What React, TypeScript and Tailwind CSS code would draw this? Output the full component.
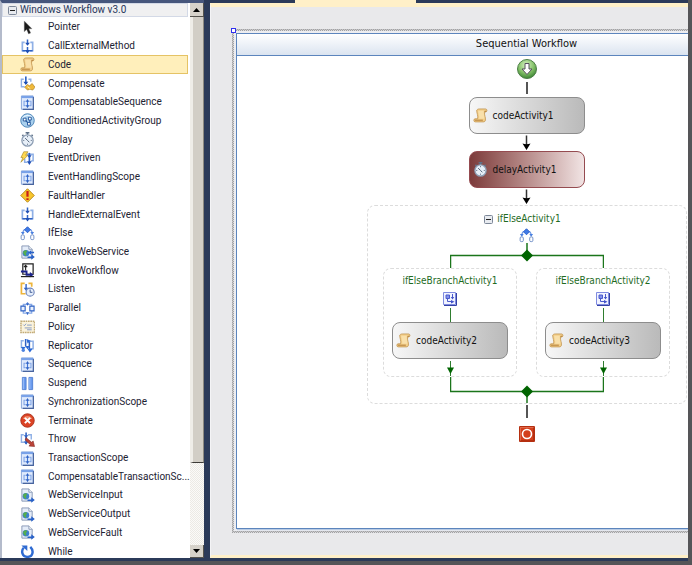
import { useState } from "react"
import type { ReactNode } from "react"

const BLUE = "#2f62c4"
const LIGHT = "#8fb0e6"

function Icon({ children }: { children: ReactNode }) {
  return (
    <svg viewBox="0 0 16 16" className="size-[15px] shrink-0" aria-hidden="true">
      {children}
    </svg>
  )
}

function PointerIcon() {
  return (
    <Icon>
      <path d="M4.500 1v11.500l2.600-2.300 2 4.600 2.300-1-2-4.400h3.400z" fill="#1c1c1c" stroke="#8a8a8a" strokeWidth=".4" />
    </Icon>
  )
}

function CallIcon() {
  return (
    <Icon>
      <path d="M5 3.500H2.500v9H6M11 3.500h2.500v9H10" fill="none" stroke={LIGHT} strokeWidth="1.800" />
      <path d="M6 12.500H2.500M10 12.500h3.500" stroke={BLUE} strokeWidth="1.400" />
      <path d="M8 .5v5M8 8.500v4" stroke={BLUE} strokeWidth="1.600" />
      <path d="M5.500 4h5L8 7.200zM5.200 11.800h5.600L8 15.500z" fill="#1f4fb5" />
    </Icon>
  )
}

function ScrollIcon() {
  return (
    <Icon>
      <path d="M4 2.200C4.800 1.200 6 1 7 1h6.500c1.800 0 1.800 3.200 0 3.200h-1.100c-.7 3.300 1.300 6 .9 8.500-.2 1.500-1 2.100-2.300 2.100H2.200c-1.600 0-1.800-3.300 0-3.300h2.600c1.200-2-1.200-7-.8-9.300z" fill="#f3cf8a" stroke="#bd8f49" strokeWidth=".8" />
      <path d="M5.500 3h6c-.6 3 .9 5.500.6 8.500H6.500c.8-2.500-1-5.500-1-8.500z" fill="#f9e0aa" />
      <path d="M2 13h8.500M12.200 3.600l2-.2" stroke="#b07b35" strokeWidth="1" />
    </Icon>
  )
}

function CompensateIcon() {
  return (
    <Icon>
      <path d="M4 3.500H1.500v8H5M9 3.500h2.500V6" fill="none" stroke={LIGHT} strokeWidth="1.500" />
      <path d="M6.200.5v8" stroke={BLUE} strokeWidth="1.800" />
      <path d="M3.600 6h5.200L6.200 9.500z" fill="#1f4fb5" />
      <path d="M5 12l3-3 2 1.500L13 8l3 4-2.500 3-3-1-2.500 1z" fill="#f0b93a" stroke="#a97c1e" strokeWidth=".7" />
      <path d="M8 11.500l3 2" stroke="#fff2bd" />
    </Icon>
  )
}

function ScopeIcon() {
  return (
    <Icon>
      <path d="M1.500 1H14v14.200H1.500z" fill="#dfeafc" stroke="#86a4da" />
      <path d="M1.500 1H14v2.300H1.500z" fill="#79a2e8" />
      <path d="M14.300 2v13.300H3" fill="none" stroke="#48649e" strokeWidth="1.200" />
      <path d="M6 6.700H4.300v4.600H6M10 6.700h1.700v4.600H10" fill="none" stroke="#86a9e8" strokeWidth="1.200" />
      <path d="M8 5v8" stroke="#3f74d6" strokeWidth="1.200" />
      <path d="M6 7.200h4L8 4.500zM6 11h4l-2 2.800z" fill={BLUE} />
    </Icon>
  )
}

function GroupIcon() {
  return (
    <Icon>
      <circle cx="8" cy="8" r="7.200" fill="#a9d0ee" stroke="#4a83b5" />
      <path d="M3 5.500C5 2 10 1.500 12.500 4.500" stroke="#e6f5ff" strokeWidth="1.500" fill="none" />
      <path d="M3.500 5.500h3v3h-3zM9 4.500h3v3H9zM8 10h3v3H8z" fill="#fff" stroke="#24569c" />
      <path d="M6 8l2.500 2.500M10.500 7.500V10" stroke="#24569c" strokeWidth="1.200" />
    </Icon>
  )
}

function ClockIcon() {
  return (
    <Icon>
      <path d="M6 .8h4M8 1v2.500M12.300 3l1.300 1.300M3.700 3L2.400 4.300" stroke="#5e7189" strokeWidth="1.500" />
      <circle cx="8" cy="9" r="6" fill="#e7eff8" stroke="#8c9db3" strokeWidth="1.400" />
      <path d="M8 4.500v1M8 12.500v1M3.500 9h1M11.500 9h1M5.500 6.500L8 9l2 2" stroke="#4b5b72" fill="none" />
    </Icon>
  )
}

function EventDrivenIcon() {
  return (
    <Icon>
      <path d="M7 3.500h7v7h-2M5 8v4h3" fill="none" stroke={LIGHT} strokeWidth="1.600" />
      <path d="M10 2v10" stroke={BLUE} strokeWidth="1.800" />
      <path d="M7.500 4.500h5L10 7.500zM7.500 11h5L10 15z" fill="#1f4fb5" />
      <path d="M4 .8h4.500L6 4.500h2.500L1 12l2.200-5H1z" fill="#ffd84e" stroke="#a8892d" strokeWidth=".7" />
    </Icon>
  )
}

function FaultIcon() {
  return (
    <Icon>
      <path d="M8 .8L15.200 8 8 15.200.8 8z" fill="#f8c62c" stroke="#b58418" strokeLinejoin="round" />
      <path d="M8 3.200v6M8 10.800v2" stroke="#c8201a" strokeWidth="2.400" />
    </Icon>
  )
}

function IfElseIcon() {
  return (
    <Icon>
      <path d="M6 3.500Q3 4 3 8M10 3.500Q13 4 13 8" fill="none" stroke="#6e98e6" strokeWidth="1.300" />
      <path d="M8 .8L11.200 4 8 7.200 4.800 4z" fill="#3f7ae6" stroke="#2b5fca" strokeLinejoin="round" />
      <path d="M1 6.300h4l-2 3zM11 6.300h4l-2 3z" fill="#4a80e0" />
      <rect x="1.200" y="9.500" width="3.400" height="5" rx="1.200" fill="#fff" stroke="#6d8cc4" />
      <rect x="11.400" y="9.500" width="3.400" height="5" rx="1.200" fill="#fff" stroke="#6d8cc4" />
    </Icon>
  )
}

function WebIcon({ both = false }: { both?: boolean }) {
  return (
    <Icon>
      <path d="M2 1h7.500L13 4.500V14H2z" fill="#e4ecf8" stroke="#8797b5" />
      <path d="M9.500 1v3.500H13" fill="#fff" stroke="#8797b5" />
      <circle cx="6.300" cy="8.800" r="3.500" fill="#3d7fd0" />
      <path d="M3.300 7.500c1-2 3-2.500 4-1.500s-1 2-1 3 1.500 1 0 2.500c-1.500 0-3-2-3-4z" fill="#55ad4e" />
      <path d="M8 12.200h4V9.800l3.800 3-3.800 3v-2H8z" fill="#2861c8" />
      {both && <path d="M15 7.200h-3V5.500L8.500 8l3.500 2.500V8.800h3z" fill="#2861c8" />}
    </Icon>
  )
}

function InvokeWorkflowIcon() {
  return (
    <Icon>
      <path d="M3 1h11v11H3z" fill="#fff" stroke="#222" strokeWidth="1.300" />
      <path d="M6 8V3M4.300 4.500L6 2.500l1.700 2" fill="none" stroke="#222" strokeWidth="1.200" />
      <path d="M1 9h6v3.500h5" fill="none" stroke="#1b238c" strokeWidth="2" />
      <path d="M10.500 9.500l4 3-4 3z" fill="#1b238c" />
      <path d="M1 14.500h14" stroke="#222" strokeWidth="1.300" />
    </Icon>
  )
}

function ListenIcon() {
  return (
    <Icon>
      <path d="M5 1.500H1.500v11H6M9 1.500h3.500V5" fill="none" stroke="#eeb53b" strokeWidth="1.800" />
      <path d="M6.500 2v5" stroke={BLUE} strokeWidth="1.500" />
      <path d="M4 6h5l-2.500 3.500z" fill={BLUE} />
      <circle cx="10.800" cy="10.800" r="4.300" fill="#e6effc" stroke="#6f86bb" strokeWidth="1.200" />
      <path d="M10.800 8v3h2.400" fill="none" stroke="#3a5590" />
    </Icon>
  )
}

function ParallelIcon() {
  return (
    <Icon>
      <path d="M8 1v2.500H3.500V13H8v2M8 3.500h4.500V13H8" fill="none" stroke="#86a9e8" strokeWidth="1.300" />
      <path d="M1 5.500h4.500v5H1zM10.500 5.500H15v5h-4.500z" fill="#eaf1fd" stroke={BLUE} strokeWidth="1.200" />
      <path d="M6.300 2.500h3.400L8 5zM6.300 12h3.400L8 14.500z" fill={BLUE} />
    </Icon>
  )
}

function PolicyIcon() {
  return (
    <Icon>
      <path d="M1 2.500h14.500v12H1z" fill="#fbf3dc" />
      <path d="M1 2.500h14.500v12H1z" fill="none" stroke="#c2ab78" strokeWidth="1.600" strokeDasharray="1.800 .7" />
      <path d="M3.500 6l1.200 1.200L6.500 5M7.500 6.500h5M5 9.500h7.500M7.500 11.500h5" fill="none" stroke="#8399c4" />
    </Icon>
  )
}

function ReplicatorIcon() {
  return (
    <Icon>
      <path d="M4 3H1.500v7H4M9 3.500h5v8h-3" fill="none" stroke={LIGHT} strokeWidth="1.600" />
      <path d="M6 1v8M10 4v9" stroke={BLUE} strokeWidth="1.600" />
      <path d="M7 1l4.500 2L8 5.800zM1 9.500h5L3.500 13zM5.500 8.500h5L8 12zM8 11.500h5.500L10.500 15.500z" fill="#2c69d4" />
      <circle cx="3.500" cy="13" r="1.800" fill="#4d83df" />
    </Icon>
  )
}

function SuspendIcon() {
  return (
    <Icon>
      <path d="M2.500 1.500h4v13h-4zM9.500 1.500h4v13h-4z" fill="#6a9bee" stroke="#3d6fcb" strokeWidth=".8" />
      <path d="M3.500 2v12M10.500 2v12" stroke="#a3c3f9" />
    </Icon>
  )
}

function TerminateIcon() {
  return (
    <Icon>
      <circle cx="8" cy="8" r="7.200" fill="#dc4325" stroke="#a52c15" strokeWidth=".9" />
      <path d="M3 6.500C4.500 2 11.500 2 13 6.500z" fill="#f08a6a" />
      <path d="M5.200 5.200l5.600 5.600M10.800 5.200l-5.600 5.600" stroke="#fff" strokeWidth="2.200" />
    </Icon>
  )
}

function ThrowIcon() {
  return (
    <Icon>
      <path d="M4 3H1.500v8H5M8.500 3h3.500v5" fill="none" stroke={LIGHT} strokeWidth="1.500" />
      <path d="M6.500.5v12" stroke={BLUE} strokeWidth="1.700" />
      <path d="M4 3.500h5L6.500 6.500zM4 10h5l-2.500 3.500z" fill={BLUE} />
      <path d="M6.500 6l6 5 1.500-1.500 1.500 6-6-.5 1.500-1.500-5.500-5z" fill="#bb4338" stroke="#7e2620" strokeWidth=".6" />
    </Icon>
  )
}

function WhileIcon() {
  return (
    <Icon>
      <path d="M4 4C1 7 2 13.700 8 13.700S15 7 11 3" fill="none" stroke="#2f6bd2" strokeWidth="2.600" />
      <path d="M1.500 1.500h6.300v6z" fill="#2f6bd2" />
    </Icon>
  )
}

const tools: { name: string; icon: ReactNode }[] = [
  { name: "Pointer", icon: <PointerIcon /> },
  { name: "CallExternalMethod", icon: <CallIcon /> },
  { name: "Code", icon: <ScrollIcon /> },
  { name: "Compensate", icon: <CompensateIcon /> },
  { name: "CompensatableSequence", icon: <ScopeIcon /> },
  { name: "ConditionedActivityGroup", icon: <GroupIcon /> },
  { name: "Delay", icon: <ClockIcon /> },
  { name: "EventDriven", icon: <EventDrivenIcon /> },
  { name: "EventHandlingScope", icon: <ScopeIcon /> },
  { name: "FaultHandler", icon: <FaultIcon /> },
  { name: "HandleExternalEvent", icon: <CallIcon /> },
  { name: "IfElse", icon: <IfElseIcon /> },
  { name: "InvokeWebService", icon: <WebIcon both /> },
  { name: "InvokeWorkflow", icon: <InvokeWorkflowIcon /> },
  { name: "Listen", icon: <ListenIcon /> },
  { name: "Parallel", icon: <ParallelIcon /> },
  { name: "Policy", icon: <PolicyIcon /> },
  { name: "Replicator", icon: <ReplicatorIcon /> },
  { name: "Sequence", icon: <ScopeIcon /> },
  { name: "Suspend", icon: <SuspendIcon /> },
  { name: "SynchronizationScope", icon: <ScopeIcon /> },
  { name: "Terminate", icon: <TerminateIcon /> },
  { name: "Throw", icon: <ThrowIcon /> },
  { name: "TransactionScope", icon: <ScopeIcon /> },
  { name: "CompensatableTransactionSc...", icon: <ScopeIcon /> },
  { name: "WebServiceInput", icon: <WebIcon /> },
  { name: "WebServiceOutput", icon: <WebIcon /> },
  { name: "WebServiceFault", icon: <WebIcon /> },
  { name: "While", icon: <WhileIcon /> },
]

function MinusBox() {
  return (
    <svg viewBox="0 0 9 9" className="size-[9px] shrink-0" aria-hidden="true">
      <rect x=".5" y=".5" width="8" height="8" rx="1" fill="#e8ebf0" stroke="#7c8798" />
      <path d="M2 4.500h5" stroke="#222" />
    </svg>
  )
}

function Scrollbar() {
  return (
    <div className="flex w-[14px] shrink-0 flex-col bg-[conic-gradient(#eceae5_25%,#fbfaf8_0_50%,#eceae5_0_75%,#fbfaf8_0)] bg-[length:2px_2px]">
      <button type="button" aria-label="Scroll up" className="flex h-[14px] shrink-0 items-center justify-center border-r border-b border-[#55534e] bg-[#d6d2ca]">
        <svg viewBox="0 0 7 4" className="h-1 w-[7px]"><path d="M0 4L3.500 0 7 4z" fill="#000" /></svg>
      </button>
      <div className="flex flex-1 flex-col">
        <div className="grow-[446] border-r border-b border-l-3 border-r-[#8c8981] border-b-[#3d3b37] border-l-[#efede8] bg-[#d2cec6]" />
        <div className="grow-[82]" />
      </div>
      <button type="button" aria-label="Scroll down" className="flex h-[13px] shrink-0 items-center justify-center border-r border-b border-[#55534e] bg-[#d6d2ca]">
        <svg viewBox="0 0 7 4" className="h-1 w-[7px]"><path d="M0 0h7L3.500 4z" fill="#000" /></svg>
      </button>
    </div>
  )
}

function Toolbox() {
  const [selected, setSelected] = useState("Code")

  return (
    <aside className="flex w-[204px] shrink-0 border-t-3 border-l-2 border-t-[#46567c] border-l-[#b4bbcb] bg-white font-[Roboto,sans-serif]">
      <div className="flex min-w-0 flex-1 flex-col overflow-hidden pr-0.5">
        <button type="button" className="flex h-[14px] shrink-0 items-center gap-[3px] border border-[#d3d9e6] bg-[#f0f0f1] pl-[5px] text-left text-[10px] leading-3 text-[#26355c]">
          <MinusBox />
          Windows Workflow v3.0
        </button>
        {/* Last row runs a little under the bottom edge */}
        <ul className="mt-px -mb-[3px] grid flex-1 auto-rows-fr grid-cols-1">
          {tools.map((tool) => (
            <li key={tool.name} className="flex min-h-0 min-w-0">
              <button
                type="button"
                onClick={() => setSelected(tool.name)}
                className={
                  tool.name === selected
                    ? "flex min-h-0 w-full items-center gap-[13px] border border-[#e5c365] bg-[#ffefbb] pl-[17px] text-left text-[10px] leading-4 text-[#1d2333]"
                    : "flex min-h-0 w-full items-center gap-[13px] border border-transparent pl-[17px] text-left text-[10px] leading-4 text-[#1d2333]"
                }
              >
                {tool.icon}
                <span className="whitespace-nowrap">{tool.name}</span>
              </button>
            </li>
          ))}
        </ul>
      </div>
      <Scrollbar />
    </aside>
  )
}

function Arrow() {
  return (
    <svg viewBox="0 0 9 17" className="h-[17px] w-[9px]" aria-hidden="true">
      <path d="M4.500 1.500v10" stroke="#333" strokeWidth="1.500" />
      <path d="M.5 9.500Q4.500 11 8.500 9.500L4.500 16z" fill="#000" />
    </svg>
  )
}

function Activity({ name }: { name: string }) {
  return (
    <button type="button" className="flex h-[37px] w-[116px] shrink-0 items-center gap-[5px] rounded-lg border border-[#8d8d8d] bg-linear-to-r from-[#f7f7f7] to-[#bababa] pl-[3px] text-[10px] text-[#111]">
      <ScrollIcon />
      {name}
    </button>
  )
}

function BranchIcon() {
  return (
    <svg viewBox="0 0 14 14" className="size-[14px]" aria-hidden="true">
      <path d="M.5.5h12v12H.5z" fill="#f1f3ff" stroke="#7f8be0" />
      <path d="M13.500 1v12.500H1" fill="none" stroke="#3341a4" />
      <path d="M3 3h3.500v3.500H3z" fill="#8291ea" stroke="#4a5acb" />
      <path d="M9.500 2v4M4.500 7v2.500H8" fill="none" stroke="#4a5acb" />
      <path d="M7.800 5h3.400L9.500 7.500zM8 8l3.500 1.800L8 11.500z" fill="#4152c9" />
    </svg>
  )
}

function Branch({ name, activity }: { name: string; activity: string }) {
  return (
    <section className="flex h-[109px] w-[134px] flex-col items-center rounded-lg border border-dashed border-[#dcdcdc] pt-[5px]">
      <h3 className="h-[14px] text-[10px] leading-[14px] text-[#1f6b1f]">{name}</h3>
      <div className="mt-1">
        <BranchIcon />
      </div>
      <div className="mt-0.5 h-[14px] w-px bg-[#2f7d2f]" />
      <Activity name={activity} />
      <svg viewBox="0 0 9 17" className="h-[17px] w-[9px]" aria-hidden="true">
        <path d="M4.500 2v15" stroke="#2f7d2f" />
        <path d="M1 8.500h7L4.500 15z" fill="#006400" />
      </svg>
    </section>
  )
}

function IfElse() {
  return (
    <section className="flex w-[320px] flex-col items-center rounded-lg border border-dashed border-[#dcdcdc] pt-[6px]">
      <h2 className="flex h-[14px] items-center gap-1 pr-2 text-[10px] leading-[14px] text-[#1f6b1f]">
        <MinusBox />
        ifElseActivity1
      </h2>
      <div className="mt-0.5">
        <IfElseIcon />
      </div>
      <svg viewBox="0 0 154 25" className="h-[25px] w-[154px]" aria-hidden="true">
        <path d="M77 0v12M.500 25V12.500h153V25" fill="none" stroke="#1b751b" strokeWidth="1.500" />
        <path d="M77 6.500l6 6-6 6-6-6z" fill="#006400" />
      </svg>
      <div className="flex gap-[19px]">
        <Branch name="ifElseBranchActivity1" activity="codeActivity2" />
        <Branch name="ifElseBranchActivity2" activity="codeActivity3" />
      </div>
      <svg viewBox="0 0 154 26" className="h-[26px] w-[154px]" aria-hidden="true">
        <path d="M.500 0v14.500h153V0M77 14v12" fill="none" stroke="#1b751b" strokeWidth="1.500" />
        <path d="M77 8.500l6 6-6 6-6-6z" fill="#006400" />
      </svg>
    </section>
  )
}

function Flow() {
  return (
    <div className="flex flex-col items-center pt-[3px]">
      <svg viewBox="0 0 20 20" className="size-5" aria-hidden="true">
        <defs>
          <radialGradient id="start" cx=".45" cy=".3" r=".75">
            <stop offset="0" stopColor="#d8f3c4" />
            <stop offset=".55" stopColor="#83c067" />
            <stop offset="1" stopColor="#2f7a2b" />
          </radialGradient>
        </defs>
        <circle cx="10" cy="10" r="9.500" fill="url(#start)" stroke="#4c7e46" />
        <path d="M8 4.500h4V10h3l-5 5.500L5 10h3z" fill="#fff" stroke="#57505f" strokeLinejoin="round" />
      </svg>
      <div className="my-[3px] h-[12px] w-0.5 bg-[#555]" />
      <Activity name="codeActivity1" />
      <Arrow />
      <button type="button" className="flex h-[37px] w-[116px] shrink-0 items-center gap-[5px] rounded-lg border border-[#954b50] bg-linear-to-r from-[#7c3b3b] to-[#f1e4e4] pl-[3px] text-[10px] text-[#111]">
        <ClockIcon />
        delayActivity1
      </button>
      <Arrow />
      <IfElse />
      <div className="my-px h-[13px] w-0.5 bg-[#555]" />
      <svg viewBox="0 0 16 16" className="mt-[7px] size-4" aria-hidden="true">
        <rect width="16" height="16" rx="1" fill="#b52f10" />
        <path d="M1 1h14L1 15z" fill="#e0694a" />
        <rect x="2" y="2" width="12" height="12" fill="#d3401d" />
        <circle cx="8" cy="8" r="4.500" fill="none" stroke="#fff" strokeWidth="1.600" />
      </svg>
    </div>
  )
}

function Designer() {
  return (
    <main className="flex min-w-0 flex-1 flex-col bg-[#2b3a59]">
      {/* Active document tab */}
      <div className="h-[3px] shrink-0">
        <div className="ml-[85px] h-full w-[121px] bg-[#fff0c8]" />
      </div>
      <div className="flex min-h-0 flex-1 overflow-hidden border-t-4 border-b-3 border-l border-y-[#fff0c8] border-l-[#f4f4f6] bg-[#e9e9eb] pt-[22px] pb-[22px] pl-[21px]">
        {/* Selection outline around the root activity */}
        <div className="relative flex w-[589px] shrink-0 bg-[conic-gradient(#a2a2a4_25%,#dcdcde_0_50%,#a2a2a4_0_75%,#c4c4c6_0)] bg-[length:2px_2px] p-0.5">
          <span className="absolute -top-px -left-px size-[5px] border border-[#3030f0] bg-white" />
          <div className="flex flex-1 bg-[#ededf0] p-0.5">
            <div className="flex flex-1 flex-col border border-[#5c85bd] bg-white shadow-[1px_1px_1px_#b9cbe4]">
              <h1 className="flex h-[22px] shrink-0 items-center justify-center border-b border-[#5c85bd] bg-linear-to-b from-white to-[#dbe4f0] text-[11px] text-[#111]">
                Sequential Workflow
              </h1>
              <Flow />
            </div>
          </div>
        </div>
      </div>
    </main>
  )
}

export default function App() {
  return (
    <div className="flex h-screen min-h-[565px] bg-[#555558] font-['DejaVu_Sans_Condensed','DejaVu_Sans',sans-serif]">
      <div className="mr-1 mb-1 flex min-w-0 flex-1 gap-1.5 overflow-hidden bg-[#2b3a59] pb-[3px]">
        <Toolbox />
        <Designer />
      </div>
    </div>
  )
}
